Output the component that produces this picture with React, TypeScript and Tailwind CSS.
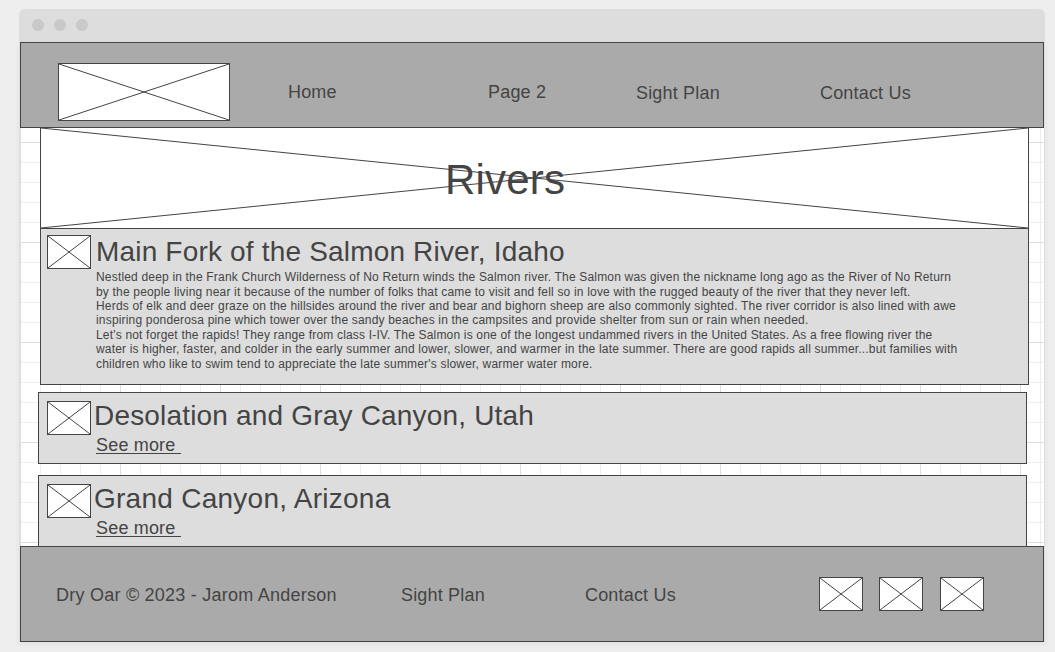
import type { ReactNode } from "react";

function Placeholder({ w, h, className = "" }: { w: number; h: number; className?: string }) {
  return (
    <svg width={w} height={h} className={`block shrink-0 ${className}`} fill="none" stroke="#444444" strokeWidth="1">
      <rect x="0.5" y="0.5" width={w - 1} height={h - 1} fill="#ffffff" />
      <path d={`M1 1L${w - 1} ${h - 1}M${w - 1} 1L1 ${h - 1}`} />
    </svg>
  );
}

function RiverCard({ title, className, children }: { title: string; className: string; children: ReactNode }) {
  return (
    <article className={`flex border border-[#444444] bg-[#dddddd] ${className}`}>
      <Placeholder w={44} h={34} />
      <div className="flex flex-col items-start">
        <h2 className="whitespace-nowrap text-[28px] leading-[30px]">{title}</h2>
        {children}
      </div>
    </article>
  );
}

function SeeMore() {
  return (
    <a className="ml-0.5 mt-1 block h-[19px] w-[85px] border-b border-[#444444] text-[18px] leading-[20px]">See more</a>
  );
}

const salmonText = [
  "Nestled deep in the Frank Church Wilderness of No Return winds the Salmon river. The Salmon was given the nickname long ago as the River of No Return",
  "by the people living near it because of the number of folks that came to visit and fell so in love with the rugged beauty of the river that they never left.",
  "Herds of elk and deer graze on the hillsides around the river and bear and bighorn sheep are also commonly sighted. The river corridor is also lined with awe",
  "inspiring ponderosa pine which tower over the sandy beaches in the campsites and provide shelter from sun or rain when needed.",
  "Let's not forget the rapids! They range from class I-IV. The Salmon is one of the longest undammed rivers in the United States. As a free flowing river the",
  "water is higher, faster, and colder in the early summer and lower, slower, and warmer in the late summer. There are good rapids all summer...but families with",
  "children who like to swim tend to appreciate the late summer's slower, warmer water more.",
];

export default function App() {
  return (
    <div className="h-[652px] w-[1055px] overflow-hidden bg-[#eeeeee] pl-[19px] pt-[9px] font-['Liberation_Sans',Arial,sans-serif] tracking-[0.18px] text-[#444444]">
      <div className="h-[633px] w-[1026px]">
        <div className="flex h-[33px] items-start gap-2.5 rounded-t-md bg-[#dddddd] pl-[13px] pt-2.5">
          <span className="size-3 rounded-full bg-[#c9c9c9]" />
          <span className="size-3 rounded-full bg-[#c9c9c9]" />
          <span className="size-3 rounded-full bg-[#c9c9c9]" />
        </div>
        <div className="h-[600px] border-x border-[#e0e0e0] bg-white bg-[linear-gradient(#dddddd_1px,transparent_1px),linear-gradient(90deg,#dddddd_1px,transparent_1px),linear-gradient(#eeeeee_1px,transparent_1px),linear-gradient(90deg,#eeeeee_1px,transparent_1px)] bg-[size:100px_100px,100px_100px,20px_20px,20px_20px] shadow-[0_2px_6px_rgba(0,0,0,0.06)]">
          <header className="flex h-[86px] w-[1024px] border border-[#444444] bg-[#aaaaaa] pl-[37px] pt-5">
            <Placeholder w={172} h={58} />
            <nav className="flex pl-[58px] pt-[19px] text-[18px] leading-[20px] whitespace-nowrap">
              <a className="w-[200px]">Home</a>
              <a className="w-[148px]">Page 2</a>
              <a className="w-[184px] pt-px">Sight Plan</a>
              <a className="pt-px">Contact Us</a>
            </nav>
          </header>
          <main className="h-[418px] overflow-hidden pl-[18px]">
            <section className="-mt-px ml-0.5 grid w-[989px]">
              <Placeholder w={989} h={102} className="col-start-1 row-start-1" />
              <h1 className="col-start-1 row-start-1 pl-[405px] pt-[29px] text-[42px] leading-[48px]">Rivers</h1>
            </section>
            <RiverCard title="Main Fork of the Salmon River, Idaho" className="-mt-px ml-0.5 h-[157px] w-[989px] gap-[5px] pl-1.5 pt-1.5 [&_h2]:leading-[34px]">
              <div className="mt-[1.2px] whitespace-nowrap text-[12px] leading-[14.4px]">
                {salmonText.map((line) => (
                  <p key={line}>{line}</p>
                ))}
              </div>
            </RiverCard>
            <RiverCard title="Desolation and Gray Canyon, Utah" className="mt-[7px] h-[72px] w-[989px] gap-[3px] pl-2 pt-2">
              <SeeMore />
            </RiverCard>
            <RiverCard title="Grand Canyon, Arizona" className="mt-[11px] h-[80px] w-[989px] gap-[3px] pl-2 pt-2 [&_h2]:tracking-[0.26px]">
              <SeeMore />
            </RiverCard>
          </main>
          <footer className="flex h-[96px] w-[1024px] border border-[#444444] bg-[#aaaaaa] pl-[35px] pt-[30px]">
            <div className="flex w-[763px] pt-[8px] text-[18px] leading-[20px] whitespace-nowrap">
              <p className="w-[345px] tracking-[0.235px]">Dry Oar © 2023 - Jarom Anderson</p>
              <a className="w-[184px]">Sight Plan</a>
              <a>Contact Us</a>
            </div>
            <Placeholder w={44} h={34} />
            <Placeholder w={44} h={34} className="ml-4" />
            <Placeholder w={44} h={34} className="ml-[17px]" />
          </footer>
        </div>
      </div>
    </div>
  );
}
